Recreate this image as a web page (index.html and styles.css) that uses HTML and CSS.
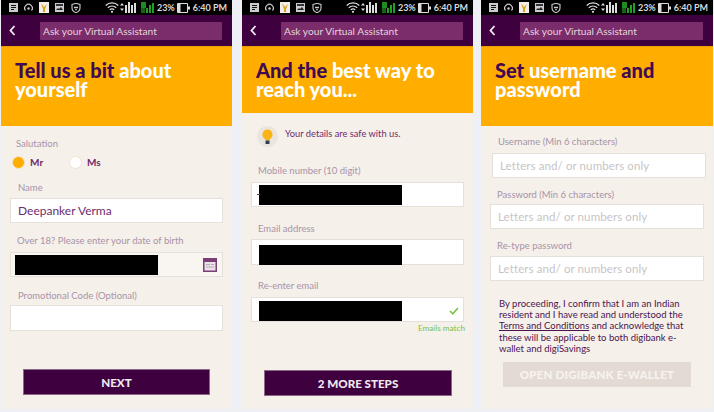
FILE: index.html
```html
<!DOCTYPE html>
<html>
<head>
<title>digibank sign up</title>
<meta charset="utf-8">
<link rel="stylesheet" href="styles.css">
</head>
<body>
<svg class="defs" width="0" height="0">
  <symbol id="i-note" viewBox="0 0 9 9"><path d="M0 0h9v9H0z" fill="#ccc"/><path d="M2 2.500h5M2 4.500h5M2 6.500h3" stroke="#111" stroke-width="1"/></symbol>
  <symbol id="i-gauge" viewBox="0 0 9 9"><path d="M1.500 7.500a3.800 3.800 0 1 1 6 0" fill="none" stroke="#ccc" stroke-width="1.200"/><circle cx="4.500" cy="5.500" r="1.200" fill="#ccc"/></symbol>
  <symbol id="i-app" viewBox="0 0 10 11"><path d="M0 0h10v11H0z" fill="#f3efe6"/><path d="M2 1l3 4 3-3-2 5v3H4V7z" fill="#e0a020"/></symbol>
  <symbol id="i-img" viewBox="0 0 9 9"><path d="M0 0h9v9H0z" fill="#ccc"/><path d="M1 7l2-2 1 1 2-2 2 3z" fill="#222"/><path d="M1 1h7v2H1z" fill="#333"/></symbol>
  <symbol id="i-shield" viewBox="0 0 10 10"><path d="M1 1.500L5 .3l4 1.200v3.500c0 2.200-2 4-4 4.700-2-.7-4-2.500-4-4.700z" fill="none" stroke="#ccc" stroke-width="1.100"/><path d="M3 3.800h4v1.400H3zM4 6.200h2v1H4z" fill="#ccc"/></symbol>
  <symbol id="i-wifi" viewBox="0 0 14 11"><g fill="none" stroke="#ddd" stroke-width="1.200"><path d="M.7 3.500a9 9 0 0 1 12.600 0"/><path d="M2.800 5.700a6 6 0 0 1 8.400 0"/><path d="M4.800 7.800a3.200 3.200 0 0 1 4.400 0"/></g><circle cx="7" cy="9.800" r="1.100" fill="#ddd"/></symbol>
  <symbol id="i-sig" viewBox="0 0 17 11"><path d="M0 3.500L2 1l2 2.500zM0 6.500h4L2 9z" fill="#ddd"/><path d="M5 3h2v8H5zM8 0h2v11H8zM11 3h2v8h-2zM14 1h2v10h-2z" fill="#ddd"/></symbol>
  <symbol id="i-green" viewBox="0 0 13 11"><path d="M0 0h5v6H0z" fill="#1e8c1e"/><path d="M5 6h2v5H5zM8 3h2v8H8zM11 1h2v10h-2z" fill="#22a022"/><path d="M0 6h4v5H0z" fill="#146414"/></symbol>
  <symbol id="i-batt" viewBox="0 0 13 10"><path d="M.5.500h10v9H.5z" fill="none" stroke="#ddd"/><path d="M1 1h2.500v8H1z" fill="#ddd"/><path d="M11 3.500h2v3h-2z" fill="#ddd"/></symbol>
  <symbol id="i-back" viewBox="0 0 7 11"><path d="M5.500 1L1.500 5.500l4 4.500" fill="none" stroke="#f3ecf1" stroke-width="1.800"/></symbol>
</svg>

<div class="phones">

  <div class="phone">
    <div class="status">
      <svg class="ic-note"><use href="#i-note"/></svg>
      <svg class="ic-gauge"><use href="#i-gauge"/></svg>
      <svg class="ic-app"><use href="#i-app"/></svg>
      <svg class="ic-img"><use href="#i-img"/></svg>
      <svg class="ic-shield"><use href="#i-shield"/></svg>
      <span class="status-right">
        <svg class="ic-wifi"><use href="#i-wifi"/></svg>
        <svg class="ic-sig"><use href="#i-sig"/></svg>
        <svg class="ic-green"><use href="#i-green"/></svg>
        <span class="pct">23%</span>
        <svg class="ic-batt"><use href="#i-batt"/></svg>
        <span class="clock">6:40 PM</span>
      </span>
    </div>
    <div class="topbar">
      <svg class="ic-back"><use href="#i-back"/></svg>
      <div class="ask">Ask your Virtual Assistant</div>
    </div>
    <div class="band">
      <h1><span class="dark">Tell us a bit</span> about yourself</h1>
    </div>
    <div class="body body-one">
      <div class="label first">Salutation</div>
      <div class="radios">
        <span class="radio on"></span><span class="radio-text">Mr</span>
        <span class="radio"></span><span class="radio-text">Ms</span>
      </div>
      <div class="label name-label">Name</div>
      <div class="input"><span class="value">Deepanker Verma</span></div>
      <div class="label dob-label">Over 18? Please enter your date of birth</div>
      <div class="input input-dim">
        <span class="mask"></span>
        <svg class="cal" width="14" height="14" viewBox="0 0 14 14"><path d="M0 0h14v14H0z" fill="#7b3f78"/><path d="M1.500 4h11v8.500h-11z" fill="#e8e2e6"/><path d="M3 6h4v1H3zM8 6h3v1H8zM3 8.500h8v1H3z" fill="#b9a8b8"/></svg>
      </div>
      <div class="label promo-label">Promotional Code (Optional)</div>
      <div class="input input-tall"></div>
      <div class="btn btn-one">NEXT</div>
    </div>
  </div>

  <div class="phone phone-two">
    <div class="status">
      <svg class="ic-note"><use href="#i-note"/></svg>
      <svg class="ic-gauge"><use href="#i-gauge"/></svg>
      <svg class="ic-app"><use href="#i-app"/></svg>
      <svg class="ic-img"><use href="#i-img"/></svg>
      <svg class="ic-shield"><use href="#i-shield"/></svg>
      <span class="status-right">
        <svg class="ic-wifi"><use href="#i-wifi"/></svg>
        <svg class="ic-sig"><use href="#i-sig"/></svg>
        <svg class="ic-green"><use href="#i-green"/></svg>
        <span class="pct">23%</span>
        <svg class="ic-batt"><use href="#i-batt"/></svg>
        <span class="clock">6:40 PM</span>
      </span>
    </div>
    <div class="topbar">
      <svg class="ic-back"><use href="#i-back"/></svg>
      <div class="ask">Ask your Virtual Assistant</div>
    </div>
    <div class="band band-short">
      <h1><span class="dark">And the</span> best way to reach you...</h1>
    </div>
    <div class="body body-two">
      <div class="safe">
        <svg class="bulb" width="21" height="21" viewBox="0 0 21 21"><circle cx="10.500" cy="10.500" r="10.500" fill="#ebe5dd"/><path d="M10.500 3.500a5 5 0 0 0-3 9c.7.600 1 1.200 1 2h4c0-.8.300-1.400 1-2a5 5 0 0 0-3-9z" fill="#fbb416"/><path d="M8.500 14.500h4v3.500h-4z" fill="#2f4050"/></svg>
        <span>Your details are safe with us.</span>
      </div>
      <div class="label">Mobile number (10 digit)</div>
      <div class="input"><span class="plus"></span><span class="mask"></span></div>
      <div class="label email-label">Email address</div>
      <div class="input input-tall"><span class="mask mask-email"></span></div>
      <div class="label again-label">Re-enter email</div>
      <div class="input">
        <span class="mask mask-again"></span>
        <svg class="tick" width="10" height="8" viewBox="0 0 10 8"><path d="M1 4l2.800 2.800L9 1" fill="none" stroke="#7ac143" stroke-width="1.600"/></svg>
      </div>
      <div class="match">Emails match</div>
      <div class="btn btn-two">2 MORE STEPS</div>
    </div>
  </div>

  <div class="phone phone-three">
    <div class="status">
      <svg class="ic-note"><use href="#i-note"/></svg>
      <svg class="ic-gauge"><use href="#i-gauge"/></svg>
      <svg class="ic-app"><use href="#i-app"/></svg>
      <svg class="ic-img"><use href="#i-img"/></svg>
      <svg class="ic-shield"><use href="#i-shield"/></svg>
      <span class="status-right">
        <svg class="ic-wifi"><use href="#i-wifi"/></svg>
        <svg class="ic-sig"><use href="#i-sig"/></svg>
        <svg class="ic-green"><use href="#i-green"/></svg>
        <span class="pct">23%</span>
        <svg class="ic-batt"><use href="#i-batt"/></svg>
        <span class="clock">6:40 PM</span>
      </span>
    </div>
    <div class="topbar">
      <svg class="ic-back"><use href="#i-back"/></svg>
      <div class="ask">Ask your Virtual Assistant</div>
    </div>
    <div class="band">
      <h1><span class="dark">Set</span> username <span class="dark">and</span> password</h1>
    </div>
    <div class="body body-three">
      <div class="label user-label">Username (Min 6 characters)</div>
      <div class="input input-shift"><span class="hint">Letters and/ or numbers only</span></div>
      <div class="label pass-label">Password (Min 6 characters)</div>
      <div class="input"><span class="hint">Letters and/ or numbers only</span></div>
      <div class="label retype-label">Re-type password</div>
      <div class="input"><span class="hint">Letters and/ or numbers only</span></div>
      <p class="terms">By proceeding, I confirm that I am an Indian resident and I have read and understood the <u>Terms and Conditions</u> and acknowledge that these will be applicable to both digibank e-wallet and digiSavings</p>
      <div class="btn btn-off">OPEN DIGIBANK E-WALLET</div>
    </div>
  </div>

</div>
</body>
</html>
```

FILE: styles.css
```css
body {margin:0;background:#eef0f5;font-family:Lato,'Open Sans',sans-serif}
.defs {display:block;height:0}
.phones {display:flex;align-items:flex-start;padding-left:1px}
.phone {width:231px;height:409px;display:flex;flex-direction:column;background:#f5f0ea;overflow:hidden}
.phone-two {margin-left:10px}
.phone-three {margin-left:8px;width:232px}

.status {height:15px;background:#000;display:flex;align-items:center;padding:0 5px 0 8px;color:#d8d8d8;font-size:9px;font-weight:700;white-space:nowrap;flex:none}
.status svg {display:block;flex:none}
.status-right {margin-left:auto;display:flex;align-items:center}
.ic-note {width:9px;height:9px}
.ic-gauge {width:9px;height:9px;margin-left:6px}
.ic-app {width:10px;height:11px;margin-left:6px}
.ic-img {width:9px;height:9px;margin-left:6px}
.ic-shield {width:10px;height:10px;margin-left:7px}
.ic-wifi {width:14px;height:11px}
.ic-sig {width:17px;height:11px;margin-left:1px}
.ic-green {width:13px;height:11px;margin-left:4px}
.pct {margin-left:3px}
.ic-batt {width:13px;height:10px;margin-left:2px}
.clock {margin-left:3px}

.topbar {height:31px;background:#3f0040;display:flex;align-items:center;padding:0 10px 0 8px;flex:none}
.ic-back {width:7px;height:11px;flex:none}
.ask {margin-left:24px;flex:1;height:18px;line-height:18px;background:#7b2d6b;border-radius:1px;color:#e3d3de;font-size:10.200px;padding-left:3px}

.band {height:80px;background:#ffae00;border-top:1px solid #e89c00;box-sizing:border-box;padding:14px 14px 0;flex:none}
.band-short {height:67px}
.band h1 {margin:0;font-size:20px;line-height:18.500px;font-weight:900;color:#fff;width:190px}
.dark {color:#3f0a52}

.body {flex:1;display:flex;flex-direction:column;padding:0 9px}
.label {font-size:9.500px;line-height:12px;color:#a893a8;padding-left:7px;margin-bottom:5px}
.first {margin-top:12px;margin-bottom:0;padding-left:6px}
.name-label {margin-top:12px;margin-bottom:4px;padding-left:8px}
.dob-label {margin-top:12px}
.promo-label {margin-top:13px;margin-bottom:3px;padding-left:8px}

.radios {display:flex;align-items:center;height:16px;margin:4px 0 0 2px}
.radio {width:13px;height:13px;box-sizing:border-box;border-radius:50%;background:#fff;border:1px solid #f0e4d0;flex:none}
.radio.on {background:#ffae00}
.radio-text {font-size:10px;font-weight:700;color:#6f2b6b;margin-left:5px;width:39px}

.input {height:25px;box-sizing:border-box;background:#fff;border:1px solid #e5e0da;display:flex;align-items:center;position:relative;flex:none}
.input-tall {height:26px}
.input-dim {background:#f9f6f2}
.value {font-size:12px;color:#6f2b6b;padding-left:7px}
.hint {font-size:11.500px;color:#c9c4c4;padding-left:7px;letter-spacing:.1px}
.mask {display:block;width:143px;height:20px;background:#000;margin-left:4px}
.plus {position:absolute;left:5px;top:11px;width:3px;height:1px;background:#7b2d6b}
.cal {position:absolute;right:5px;top:5px}
.tick {position:absolute;right:4px;top:9px}
.input-shift {margin-left:2px;margin-right:-2px}

.btn {height:26px;line-height:25px;background:#3f0040;border:1px solid #8a6a88;box-sizing:border-box;color:#efe8ee;font-size:11.600px;font-weight:900;text-align:center;flex:none}
.btn-one {margin:38px 13px 0 13px}
.btn-two {margin:37px 12px 0 13px}
.btn-off {height:25px;margin:8px 13px 0 13px;background:#e3dbd3;border:0;color:#f7f3ee;font-size:11.500px;letter-spacing:.2px}

.body-two .mask {margin-left:7px}
.body-two .mask-email {align-self:flex-start;margin-top:5px}
.body-two .mask-again {align-self:flex-start;margin-top:3px}
.safe {display:flex;align-items:flex-start;height:21px;margin:13px 0 18px 6px;font-size:9.300px;color:#6f2b6b}
.safe span {margin:2px 0 0 7px}
.bulb {flex:none}
.email-label {margin-top:16px;margin-bottom:4px}
.again-label {margin-top:15px}
.match {font-size:8.200px;line-height:10px;color:#7ac143;text-align:right;margin-top:1px;margin-right:-1px}

.user-label {margin-top:10px;padding-left:8px}
.pass-label {margin-top:11px;margin-bottom:3px}
.retype-label {margin-top:11px;margin-bottom:4px}
.terms {margin:17px 8px 0 9px;font-size:9.500px;line-height:11.200px;color:#4b1450}
```
